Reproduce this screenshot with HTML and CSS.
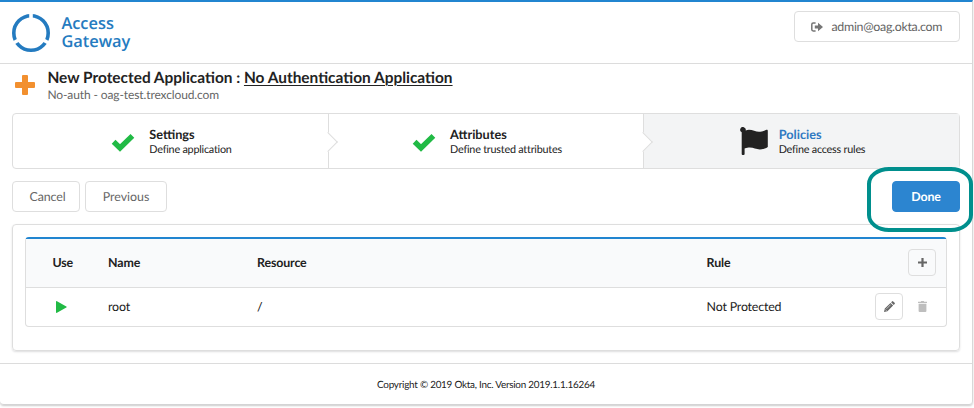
FILE: index.html
```
<!DOCTYPE html>
<html lang="en">
<head>
<meta charset="utf-8">
<title>Access Gateway</title>
<link rel="stylesheet" href="styles.css">
</head>
<body>
<div class="page">
  <header class="topbar">
    <div class="brand">
      <svg class="ring" viewBox="0 0 38 38"><circle cx="19" cy="19" r="17.2" fill="none" stroke="#247bc0" stroke-width="3.6"/><path d="M19 19V-2M19 19L0 29.8M19 19L38 29.8" stroke="#fff" stroke-width="3.6"/></svg>
      <div class="brand-name">Access<br>Gateway</div>
    </div>
    <button class="btn account">
      <svg class="signout" viewBox="0 0 12 10"><path d="M4.6 1H2.2Q.8 1 .8 2.4V7.6Q.8 9 2.2 9H4.6" fill="none" stroke="#767676" stroke-width="1.5"/><path d="M3.8 3.4H7V.8L12 5 7 9.2V6.6H3.8Z" fill="#767676"/></svg>
      <span class="account-name">admin@oag.okta.com</span>
    </button>
  </header>
  <main class="content">
    <div class="heading">
      <svg class="plus" viewBox="0 0 20 20"><path d="M8 0h4q1 0 1 1v6h6q1 0 1 1v4q0 1-1 1h-6v6q0 1-1 1H8q-1 0-1-1v-6H1q-1 0-1-1V8q0-1 1-1h6V1q0-1 1-1Z" fill="#f2902f"/></svg>
      <div>
        <h1 class="title">New Protected Application : <span class="app-name">No Authentication Application</span></h1>
        <p class="subtitle">No-auth - oag-test.trexcloud.com</p>
      </div>
    </div>
    <div class="steps">
      <div class="step">
        <svg class="check" viewBox="0 0 24 19"><path d="M2.6 8.8 9 15 21.4 2.9" fill="none" stroke="#21ba45" stroke-width="5.4"/></svg>
        <div><div class="step-title">Settings</div><div class="step-text">Define application</div></div>
      </div>
      <div class="step">
        <svg class="check" viewBox="0 0 24 19"><path d="M2.6 8.8 9 15 21.4 2.9" fill="none" stroke="#21ba45" stroke-width="5.4"/></svg>
        <div><div class="step-title">Attributes</div><div class="step-text">Define trusted attributes</div></div>
      </div>
      <div class="step active">
        <svg class="flag" viewBox="0 0 28 28"><path d="M1.7 5.3A2.8 2.8 0 1 1 5.7 3.4C10.5 1.3 15 4.8 19 4.8c3 0 5-1 7.4-2 .9-.3 1.4.2 1.4 1V20c-3 2-5.4 2.4-8 2.4-5 0-8-3.5-15.2-.8V27q0 1-1 1h-1q-.9 0-.9-1Z" fill="#222"/></svg>
        <div><div class="step-title">Policies</div><div class="step-text">Define access rules</div></div>
      </div>
    </div>
    <div class="actions">
      <button class="btn cancel">Cancel</button>
      <button class="btn previous">Previous</button>
      <div class="done-wrap"><button class="btn done">Done</button><span class="highlight"></span></div>
    </div>
    <section class="panel">
      <div class="table">
        <div class="row head">
          <span class="use">Use</span><span>Name</span><span>Resource</span><span>Rule</span>
          <div class="tools"><button class="icon-btn"><svg width="9" height="9" viewBox="0 0 9 9"><path d="M4.5 0v9M0 4.5h9" stroke="#666" stroke-width="2.2"/></svg></button></div>
        </div>
        <div class="row">
          <span class="use"><svg class="play" viewBox="0 0 11 12"><path d="M0 .7Q0-.2 1 .2L10.3 5.5Q11.2 6 10.3 6.5L1 11.8Q0 12.2 0 11.3Z" fill="#21ba45"/></svg></span><span>root</span><span>/</span><span>Not Protected</span>
          <div class="tools">
            <button class="icon-btn edit"><svg width="11" height="11" viewBox="0 0 11 11"><path d="M0 11 .8 7.6 6.5 1.9 9.1 4.5 3.4 10.2ZM7.1 1.3 8 .4Q8.6-.2 9.2.4L10.6 1.8Q11.2 2.4 10.6 3L9.7 3.9Z" fill="#666"/><path d="m2.5 7.8 4.2-4.2M1.2 8.4l1.4 1.4" stroke="#fff" stroke-width=".6"/></svg></button>
            <button class="icon-btn trash"><svg width="9" height="11" viewBox="0 0 9 11"><path d="M0 .8H2.8L3.2 0H5.8L6.2.8H9V2H0ZM.6 2.7H8.4V10Q8.4 11 7.4 11H1.6Q.6 11 .6 10Z" fill="#bebebe"/></svg></button>
          </div>
        </div>
      </div>
    </section>
  </main>
  <footer class="footer">Copyright © 2019 Okta, Inc. Version 2019.1.1.16264</footer>
</div>
</body>
</html>
```
FILE: styles.css
```
* { box-sizing: border-box; }
body { margin: 0; height: 408px; overflow: hidden; background: #fff; color: #222; font: 12.4px/16px Lato, sans-serif; text-rendering: geometricPrecision; }
svg { display: block; flex: none; }
.page { width: 973px; height: 405px; border-top: 2px solid #2185d0; border-right: 1px solid #d8d8d8; border-bottom: 1px solid #d4d4d5; border-radius: 0 0 4px 4px; box-shadow: 0 1px 2px #ccc; }
.topbar { height: 62px; display: flex; justify-content: space-between; align-items: flex-start; padding: 9px 12px 0; border-bottom: 1px solid #dcdcdc; }
.brand { display: flex; gap: 11px; padding: 2px 0 0 .4px; }
.ring { width: 38px; height: 38px; margin-top: 1px; }
.brand-name { color: #247bc0; font: 600 16.4px/18px "Open Sans", sans-serif; padding-top: 1px; }
.btn { height: 31px; border: 1px solid #dedede; border-radius: 4px; background: #fff; color: #666; font: 12.4px/16px Lato, sans-serif; padding: 0; text-rendering: inherit; }
.account { width: 166px; display: flex; align-items: center; padding-left: 16px; gap: 8.5px; letter-spacing: -.29px; }
.signout { width: 12px; height: 10px; }
.content { padding: 0 12px; }
.heading { display: flex; gap: 12px; height: 49px; padding: 5px 0 0 3.4px; }
.plus { width: 20px; height: 20px; margin-top: 6px; }
.title { margin: 0; font-size: 15.43px; line-height: 18px; font-weight: 700; white-space: nowrap; }
.app-name { text-decoration: underline; text-decoration-thickness: 1px; text-underline-offset: 2px; }
.subtitle { margin: 0; color: #666; font-size: 12px; line-height: 15px; letter-spacing: -.11px; }
.steps { display: grid; grid-template-columns: 316px 315px 1fr; height: 56px; border: 1px solid #dedede; border-radius: 4px; }
.step { position: relative; display: flex; align-items: center; justify-content: center; gap: 14px; padding-left: 2px; border-right: 1px solid #dedede; }
.step:not(:last-child)::after { content: ""; position: absolute; right: -7px; top: 21px; width: 13px; height: 13px; z-index: 1; background: #fff; border: solid #dedede; border-width: 1px 1px 0 0; transform: rotate(45deg); }
.step.active { background: #f3f4f5; border: 0; gap: 11px; }
.check { width: 24px; height: 19px; margin-top: 2px; }
.flag { width: 28px; height: 28px; }
.step-title { font-size: 12.7px; font-weight: 700; line-height: 16px; }
.step-text { font-size: 10.8px; line-height: 15px; letter-spacing: -.22px; }
.active .step-title { color: #3079c2; }
.actions { display: flex; gap: 5px; padding: 12px 0; }
.cancel { width: 68px; letter-spacing: -.1px; padding-left: 3px; }
.previous { width: 82px; }
.done-wrap { position: relative; margin-left: auto; }
.done { width: 68px; display: block; background: #2c85d0; border-color: #2c85d0; color: #fff; font-weight: 700; letter-spacing: -.2px; }
.highlight { position: absolute; left: -25px; top: -14px; width: 106px; height: 65px; border: 4px solid #008f8d; border-radius: 22px / 17px; z-index: 2; }
.panel { height: 127px; border: 1px solid #dedede; border-radius: 4px; padding: 12px; box-shadow: 0 1px 2px rgba(34,36,38,.15); }
.table { height: 90px; border: 1px solid #dedede; border-top: 2px solid #2185d0; border-radius: 4px; }
.row { display: grid; grid-template-columns: 82px 149px 449.6px 1fr 80px; align-items: center; height: 38px; letter-spacing: -.18px; }
.head { height: 49px; background: #f9fafb; border-bottom: 1px solid #dedede; font-weight: 700; letter-spacing: -.13px; }
.use { padding-left: 26.5px; }
.play { width: 11px; height: 12px; margin-left: 3.5px; }
.tools { display: flex; justify-content: flex-end; padding-right: 10px; gap: 5px; margin-top: -2px; }
.icon-btn { width: 28px; height: 27px; display: flex; align-items: center; justify-content: center; padding: 0; border: 1px solid #dedede; border-radius: 4px; background: transparent; }
.trash { border-color: transparent; }
.footer { margin-top: 12px; border-top: 1px solid #dcdcdc; padding-top: 13px; font-size: 9.9px; letter-spacing: -.24px; text-align: center; }
```
